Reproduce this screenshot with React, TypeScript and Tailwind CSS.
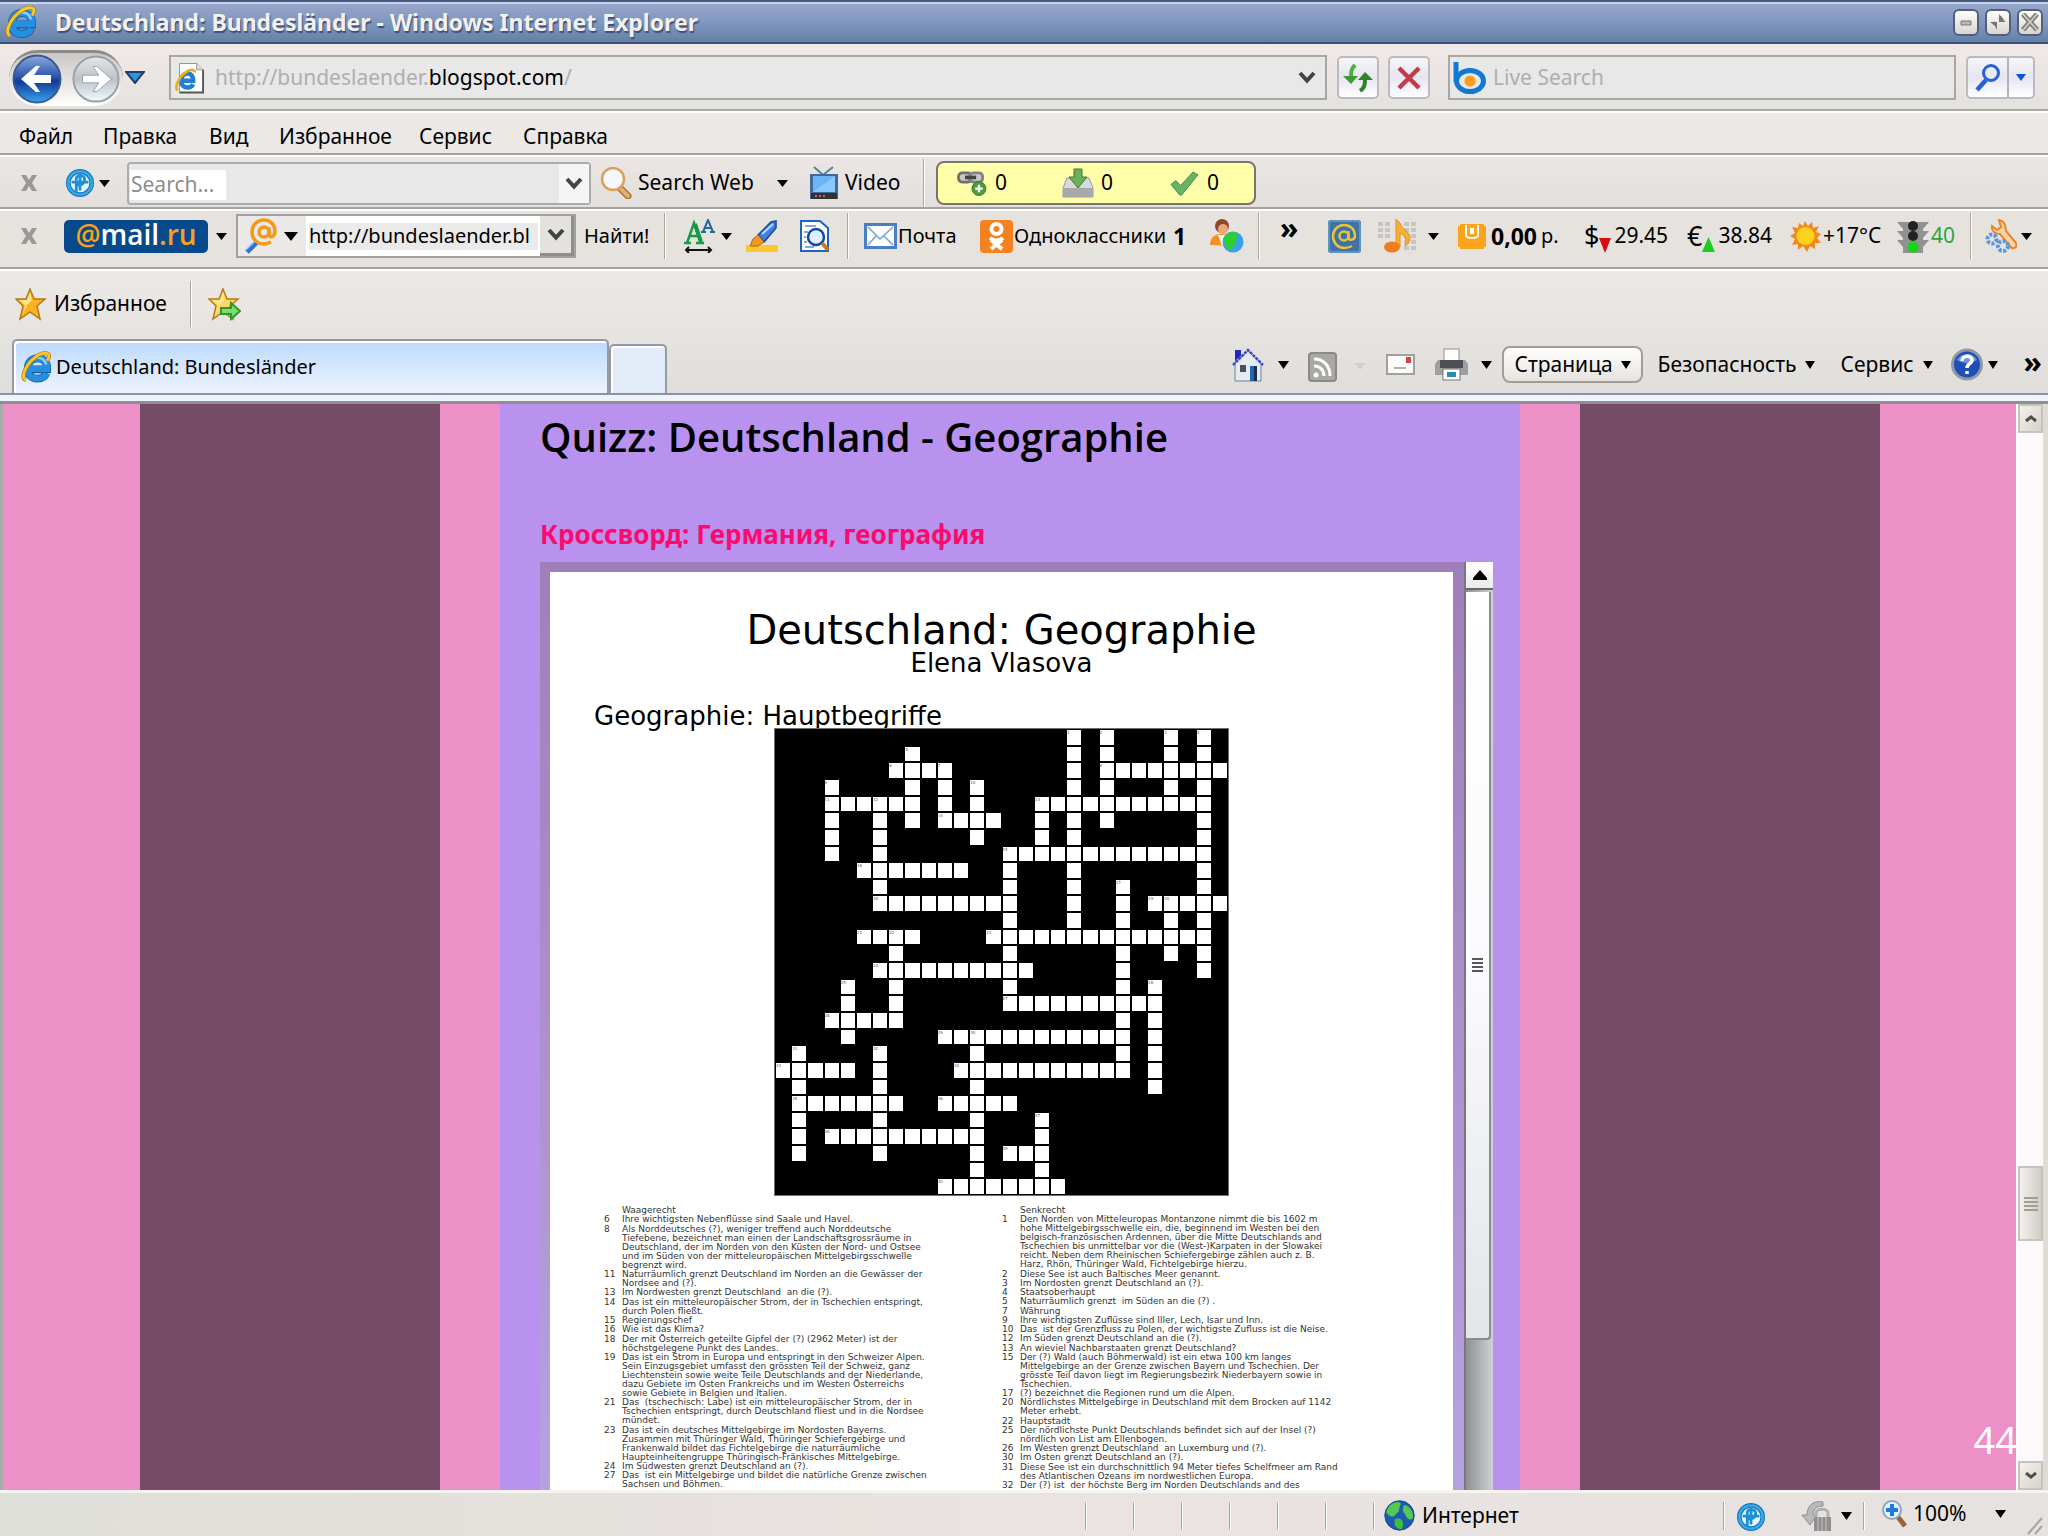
import type { ReactNode } from "react";

/* ---------- small shared pieces ---------- */

function Caret({ color = "#000", className = "" }: { color?: string; className?: string }) {
  return (
    <svg className={"shrink-0 " + className} width="12" height="8" viewBox="0 0 12 8" preserveAspectRatio="none" aria-hidden="true">
      <path d="M0 0H12L6 8Z" fill={color} />
    </svg>
  );
}

function Chevron({ className = "" }: { className?: string }) {
  return (
    <svg className={"shrink-0 " + className} width="18" height="13" viewBox="0 0 18 13" fill="none" stroke="#444" strokeWidth="4" aria-hidden="true">
      <path d="M2 2L9 9.500L16 2" />
    </svg>
  );
}

function Sep({ className = "" }: { className?: string }) {
  return <span className={"shrink-0 w-[2px] border-l border-l-[#a9a7a3] border-r border-r-white " + className} />;
}

function Tool({ label, className = "", children }: { label?: string; className?: string; children: ReactNode }) {
  return (
    <button type="button" aria-label={label} className={"flex shrink-0 items-center whitespace-nowrap " + className}>
      {children}
    </button>
  );
}

function CloseX() {
  return (
    <svg width="18" height="18" viewBox="0 0 18 18" aria-hidden="true">
      <path d="M1 1H6L9 6L12 1H17L12 9L17 17H12L9 12L6 17H1L6 9Z" fill="#9a9895" />
    </svg>
  );
}

/* ---------- icons ---------- */

function IeLogo({ className = "h-[33px] w-[30px]" }: { className?: string }) {
  return (
    <svg className={"shrink-0 " + className} viewBox="0 0 32 32" fill="none" aria-hidden="true">
      <path d="M9 18H27C27.500 9 22 6.500 17 6.500C11 6.500 7 11 7 17C7 24 11 27.500 17 27.500C22 27.500 25 25 26 22" stroke="#14589f" strokeWidth="8" />
      <path d="M9 17.500H27C27.500 9 22 6.500 17 6.500C11 6.500 7 11 7 17C7 24 11 27.500 17 27.500C22 27.500 25 25 26 22" stroke="#2590e2" strokeWidth="6.500" />
      <path d="M8 14C9 9 13 6 17 6C22 6 25 9 26 13" stroke="#7fd0fb" strokeWidth="2.500" />
      <path d="M5 29C-1 27 5 13 14 6C21 0 29 0 29 4C29 6 28 7.500 27 9" stroke="#a8760c" strokeWidth="4.200" />
      <path d="M5 29C-1 27 5 13 14 6C21 0 29 0 29 4C29 6 28 7.500 27 9" stroke="#f7c92f" strokeWidth="2.800" />
    </svg>
  );
}

function PageIe() {
  return (
    <svg className="h-[32px] w-[29px] shrink-0" viewBox="0 0 32 34" fill="none" aria-hidden="true">
      <path d="M5 1H24L31 8V33H5Z" fill="#fff" stroke="#8b8b8b" />
      <path d="M31 8V33H5" stroke="#555" strokeWidth="2" />
      <path d="M24 1V8H31" fill="#ddd" stroke="#8b8b8b" />
      <path d="M7 20H20C20 14 17 12 14 12C10 12 7 15 7 20C7 25 10 27.500 14 27.500C17 27.500 19 26 20 24" stroke="#1f7fd6" strokeWidth="5" />
      <path d="M3 31C-1 28 4 17 10 12C16 7 22 7 22 11" stroke="#e9b01e" strokeWidth="3" />
    </svg>
  );
}

function ToolbarGlobe() {
  return (
    <svg className="h-[30px] w-[28px] shrink-0" viewBox="0 0 30 30" fill="none" aria-hidden="true">
      <circle cx="15" cy="15" r="12.500" fill="#e8f6fd" stroke="#1478c0" strokeWidth="5" />
      <circle cx="15" cy="15" r="12.500" stroke="#3aa9e6" strokeWidth="2.500" />
      <path d="M15 5V23M6 14H24M11 25V10C11 6 20 6 20 11C20 17 15 17 11 17" stroke="#1d8fd6" strokeWidth="3" />
    </svg>
  );
}

function Magnifier() {
  return (
    <svg className="h-[32px] w-[32px] shrink-0" viewBox="0 0 32 32" fill="none" aria-hidden="true">
      <path d="M21 22L28 29" stroke="#a8723a" strokeWidth="7" strokeLinecap="round" />
      <path d="M21 22L28 29" stroke="#e3b071" strokeWidth="4" strokeLinecap="round" />
      <circle cx="13" cy="12" r="11" fill="#f4f8fd" stroke="#d9a05a" strokeWidth="2.500" />
    </svg>
  );
}

function Tv() {
  return (
    <svg className="h-[34px] w-[28px] shrink-0" viewBox="0 0 28 34" fill="none" aria-hidden="true">
      <path d="M4 1L13 9L23 1" stroke="#5f7d9c" strokeWidth="2" />
      <rect x="0" y="8" width="28" height="25" fill="#3e6b99" />
      <rect x="3" y="10" width="22" height="16" fill="#6cb4f8" />
      <path d="M3 26L25 10V26Z" fill="#8cc8ff" />
      <rect x="1" y="27" width="26" height="6" fill="#333" />
      <path d="M5 30H17" stroke="#c86a4a" strokeWidth="2" strokeDasharray="2 2" />
    </svg>
  );
}

function ChainPlus() {
  return (
    <svg className="h-[26px] w-[31px] shrink-0" viewBox="0 0 32 28" fill="none" aria-hidden="true">
      <rect x="2" y="3" width="14" height="10" rx="4" fill="#c9c9c9" stroke="#6f6f6f" strokeWidth="3" />
      <rect x="14" y="3" width="14" height="10" rx="4" fill="#c9c9c9" stroke="#828282" strokeWidth="3" />
      <path d="M9 8H21" stroke="#444" strokeWidth="4" />
      <circle cx="24" cy="20" r="7.500" fill="#4f9a3c" stroke="#3a7a2b" />
      <path d="M24 16V24M20 20H28" stroke="#fff" strokeWidth="2.500" />
    </svg>
  );
}

function DownloadTray() {
  return (
    <svg className="h-[30px] w-[32px] shrink-0" viewBox="0 0 32 30" aria-hidden="true">
      <path d="M5 10H27L31 20V29H1V20Z" fill="#d9d9dc" stroke="#9a9a9e" />
      <path d="M1 20H31V29H1Z" fill="#a8a8ad" />
      <path d="M12 1H20V9H25L16 20L7 9H12Z" fill="#6cb05a" stroke="#3f7d30" />
    </svg>
  );
}

function CheckMark() {
  return (
    <svg className="h-[25px] w-[29px] shrink-0" viewBox="0 0 30 26" aria-hidden="true">
      <path d="M1 14L6 10L11 15L24 1L29 4L12 25H10Z" fill="#67b267" stroke="#3f8b45" />
    </svg>
  );
}

function AtLens() {
  return (
    <svg className="h-[36px] w-[34px] shrink-0" viewBox="0 0 34 36" fill="none" aria-hidden="true">
      <path d="M3 34L13 24" stroke="#2f6fd0" strokeWidth="5" />
      <path d="M2 32L11 23" stroke="#9cc3ff" strokeWidth="1.500" />
      <circle cx="20" cy="14" r="5" stroke="#f59a17" strokeWidth="3.500" />
      <path d="M25 9V16C25 21 31 19 31 13C31 7 27 2 20 2C13 2 8 7 8 14C8 21 13 26 20 26C23 26 25 25 27 24" stroke="#f59a17" strokeWidth="3.500" />
    </svg>
  );
}

function FontSize() {
  return (
    <svg className="h-[34px] w-[32px] shrink-0" viewBox="0 0 32 34" fill="none" aria-hidden="true">
      <path d="M1 24H8M4 24L11 4L18 24M13 24H21M7 17H15" stroke="#18994a" strokeWidth="2.500" />
      <path d="M12 5L18 23" stroke="#18994a" strokeWidth="4" />
      <path d="M18 13H23M20 13L25 1L30 13M27 13H32M22 9H28" stroke="#1f6b9c" strokeWidth="2" />
      <path d="M3 31H28M6 28L3 31L6 34M25 28L28 31L25 34" stroke="#111" strokeWidth="2" />
    </svg>
  );
}

function Highlighter() {
  return (
    <svg className="h-[32px] w-[32px] shrink-0" viewBox="0 0 32 32" aria-hidden="true">
      <rect x="0" y="25" width="32" height="7" fill="#fcc62f" />
      <path d="M12 15L25 2L30 1V8L18 22Z" fill="#3f82dd" stroke="#1a4695" strokeWidth="1.500" />
      <path d="M16 14L27 4" stroke="#b9d8ff" strokeWidth="2" />
      <path d="M12 15L18 22L12 26H4L7 19Z" fill="#ef9a25" stroke="#b86408" />
    </svg>
  );
}

function PageSearch() {
  return (
    <svg className="h-[32px] w-[30px] shrink-0" viewBox="0 0 30 32" fill="none" aria-hidden="true">
      <path d="M1 1H20L28 8V31H1Z" fill="#fff" stroke="#1d62c9" strokeWidth="2" />
      <path d="M5 6H16M4 12H8M4 17H6M4 22H7M5 27H14" stroke="#7fa9e6" strokeWidth="2" />
      <circle cx="16" cy="17" r="8" fill="#dceeff" stroke="#1746a0" strokeWidth="2.500" />
      <path d="M22 23L28 30" stroke="#c87620" strokeWidth="4" />
    </svg>
  );
}

function Envelope() {
  return (
    <svg className="h-[26px] w-[33px] shrink-0" viewBox="0 0 33 26" fill="none" aria-hidden="true">
      <rect x="1.500" y="1.500" width="30" height="23" fill="#fbfdff" stroke="#4a7fc4" strokeWidth="3" />
      <path d="M4 4L16 16L29 4M4 22L12 13M29 22L20 13" stroke="#7aa2d6" strokeWidth="1.500" />
    </svg>
  );
}

function OkLogo() {
  return (
    <svg className="h-[33px] w-[33px] shrink-0" viewBox="0 0 33 33" fill="none" aria-hidden="true">
      <rect width="33" height="33" rx="4" fill="#f58220" />
      <circle cx="16.500" cy="9" r="5" stroke="#fff" strokeWidth="4" />
      <path d="M10 18C14 21 19 21 23 18M11 29L22 20M22 29L11 20" stroke="#fff" strokeWidth="4" />
    </svg>
  );
}

function PeopleGlobe() {
  return (
    <svg className="h-[34px] w-[34px] shrink-0" viewBox="0 0 34 34" aria-hidden="true">
      <circle cx="12" cy="7" r="7" fill="#8a4a28" />
      <circle cx="13" cy="10" r="5" fill="#e8a878" />
      <path d="M0 26C0 17 6 15 12 15C18 15 22 18 22 27Z" fill="#f98f20" />
      <path d="M8 16L12 27L17 16Z" fill="#fff" />
      <circle cx="23" cy="23" r="10.500" fill="#3aa0ee" />
      <path d="M14 18C18 12 26 12 28 15C26 19 28 22 24 27C22 32 18 31 15 27Z" fill="#2fce35" />
    </svg>
  );
}

function AtSquare() {
  return (
    <svg className="h-[33px] w-[33px] shrink-0" viewBox="0 0 33 33" fill="none" aria-hidden="true">
      <rect width="33" height="33" rx="3" fill="#3f73a8" />
      <rect x="1" y="1" width="31" height="31" rx="3" stroke="#5f93c4" strokeWidth="2" />
      <circle cx="16" cy="16" r="4.500" stroke="#e9c33a" strokeWidth="2.500" />
      <path d="M20.500 11V18C21 21 27 20 27 16C27 9 22 5 16 5C10 5 5 10 5 16C5 23 10 28 16 28C20 28 22 27 24 26" stroke="#e9c33a" strokeWidth="2.500" />
    </svg>
  );
}

function MusicNote() {
  return (
    <svg className="h-[34px] w-[38px] shrink-0" viewBox="0 0 38 34" fill="none" aria-hidden="true">
      <path d="M0 5H12M0 11H12M0 17H12M26 5H38M26 11H38M26 17H38M26 23H38M26 29H38" stroke="#c7c5c2" strokeWidth="4" strokeDasharray="5 2" />
      <path d="M18 0L22 4C24 11 33 13 32 20C31 24 29 26 27 27C30 20 26 16 22 14V28H18Z" fill="#f6b033" stroke="#e08f1c" />
      <ellipse cx="14" cy="28" rx="8" ry="5.500" fill="#ee7f1f" />
    </svg>
  );
}

function Purse() {
  return (
    <svg className="h-[25px] w-[28px] shrink-0" viewBox="0 0 28 25" fill="none" aria-hidden="true">
      <path d="M2 0H26V2H28V23H26V25H2V23H0V2H2Z" fill="#fba51c" />
      <path d="M8 1V11C8 15 20 15 20 11V1" stroke="#fff" strokeWidth="2" />
      <rect x="12" y="4" width="4" height="6" fill="#fff" />
    </svg>
  );
}

function Sun() {
  return (
    <svg className="h-[31px] w-[31px] shrink-0" viewBox="0 0 31 31" aria-hidden="true">
      <path d="M15 0L18 5L22 1L23 7L29 5L26 11L31 13L27 17L31 22L25 22L25 28L20 25L17 31L13 25L8 29L8 23L2 24L5 18L0 15L5 12L2 6L8 7L9 2L13 5Z" fill="#f08a1d" />
      <circle cx="15.500" cy="15" r="9" fill="#ffd21c" />
    </svg>
  );
}

function TrafficLight() {
  return (
    <svg className="h-[33px] w-[32px] shrink-0" viewBox="0 0 32 33" aria-hidden="true">
      <path d="M0 2H32L26 9V11H32L26 18V20H32L26 27V33H6V27L0 20H6V18L0 11H6V9Z" fill="#8f9192" />
      <circle cx="16" cy="6" r="5" fill="#222" />
      <circle cx="16" cy="16" r="5" fill="#222" />
      <circle cx="16" cy="27" r="5.500" fill="#15d515" />
    </svg>
  );
}

function Wrench() {
  return (
    <svg className="h-[34px] w-[32px] shrink-0" viewBox="0 0 32 34" fill="none" aria-hidden="true">
      <path d="M14 1C22 3 20 9 21 12L31 24C33 29 27 31 25 27L15 15C10 15 6 12 7 7L12 11L16 8Z" fill="#fbd3a5" stroke="#ee8324" strokeWidth="2" />
      <circle cx="7" cy="20" r="4.500" stroke="#5b95e0" strokeWidth="4" strokeDasharray="3 1.500" />
      <circle cx="18" cy="27" r="5" stroke="#5b95e0" strokeWidth="4" strokeDasharray="3 1.500" />
    </svg>
  );
}

function Star({ arrow = false }: { arrow?: boolean }) {
  return (
    <svg className="h-[33px] w-[33px] shrink-0" viewBox="0 0 33 33" aria-hidden="true">
      <path d="M15 1L19 11H30L22 18L25 31L15 24L5 31L8 18L1 11H11Z" fill={arrow ? "#fbd768" : "#fcb322"} stroke="#b87a10" strokeWidth="1.500" />
      <path d="M15 4L17 12L12 17L8 26L10 17L4 12H12Z" fill="#ffe48c" />
      {arrow && <path d="M13 20H23V15L32 23L23 31V26H13Z" fill="#7fdc6c" stroke="#2d9a28" strokeWidth="2" />}
    </svg>
  );
}

function HomeIcon() {
  return (
    <svg className="h-[34px] w-[32px] shrink-0" viewBox="0 0 32 34" aria-hidden="true">
      <path d="M3 2H9V8L3 13Z" fill="#2626c4" />
      <path d="M3 15L16 3L29 15V33H3Z" fill="#e4ebf3" stroke="#6b7f99" />
      <path d="M1 17L16 2L31 17" fill="none" stroke="#3b49c8" strokeWidth="2.500" strokeDasharray="3 1" />
      <rect x="8" y="17" width="6" height="7" fill="#4a4f5a" />
      <rect x="18" y="18" width="7" height="15" fill="#2264ad" />
      <rect x="22" y="18" width="3" height="15" fill="#17304f" />
    </svg>
  );
}

function RssIcon() {
  return (
    <svg className="h-[30px] w-[29px] shrink-0" viewBox="0 0 29 30" fill="none" aria-hidden="true">
      <rect x="1" y="1" width="27" height="28" rx="3" fill="#a9a8a5" stroke="#8b8a87" strokeWidth="2" />
      <circle cx="8" cy="23" r="2.500" fill="#fff" />
      <path d="M6 14C12 14 16 18 16 24M6 7C16 7 22 14 22 24" stroke="#fff" strokeWidth="3" />
    </svg>
  );
}

function MailSmall() {
  return (
    <svg className="h-[21px] w-[29px] shrink-0" viewBox="0 0 29 21" aria-hidden="true">
      <rect x="1" y="1" width="27" height="19" fill="#fcfcfc" stroke="#a3a09c" strokeWidth="2" />
      <rect x="20" y="3" width="5" height="6" fill="#d8433f" />
      <path d="M8 14H20" stroke="#999" strokeWidth="1.500" />
    </svg>
  );
}

function Printer() {
  return (
    <svg className="h-[33px] w-[33px] shrink-0" viewBox="0 0 33 33" aria-hidden="true">
      <rect x="9" y="1" width="15" height="12" fill="#fff" stroke="#8e8e8e" />
      <path d="M3 12H30L33 16V27H0V16Z" fill="#9d9fa1" />
      <rect x="5" y="12" width="23" height="8" fill="#4d5053" />
      <rect x="8" y="21" width="17" height="11" fill="#fff" stroke="#777" />
      <rect x="12" y="24" width="9" height="5" fill="#2b8cae" />
    </svg>
  );
}

function HelpIcon() {
  return (
    <svg className="h-[33px] w-[32px] shrink-0" viewBox="0 0 32 33" fill="none" aria-hidden="true">
      <circle cx="16" cy="16.500" r="14.500" fill="#1f4fb5" stroke="#8f97a8" strokeWidth="3" />
      <path d="M6 12C10 4 22 4 26 12C20 16 12 16 6 12Z" fill="#6d93e0" />
      <path d="M11 13C11 7 21 7 21 12C21 16 16 15 16 20M16 23V26" stroke="#fff" strokeWidth="3.500" />
    </svg>
  );
}

function EarthIcon() {
  return (
    <svg className="h-[31px] w-[31px] shrink-0" viewBox="0 0 31 31" aria-hidden="true">
      <circle cx="15.500" cy="15.500" r="15" fill="#1d5cb0" />
      <path d="M4 7C9 1 16 1 17 4C14 8 17 11 12 14C9 19 5 16 2 12Z" fill="#54c853" />
      <path d="M20 5C26 6 30 12 29 18C25 22 22 17 21 14C18 11 19 8 20 5Z" fill="#54c853" />
      <path d="M11 19C17 17 21 21 18 29C14 30 9 26 11 19Z" fill="#3fbf3c" />
      <circle cx="15.500" cy="15.500" r="14.500" fill="none" stroke="#1b4a86" />
    </svg>
  );
}

function LockArc() {
  return (
    <svg className="h-[32px] w-[32px] shrink-0" viewBox="0 0 32 32" fill="none" aria-hidden="true">
      <path d="M22 2C12 0 6 6 6 15H1L9 25L16 15H12C12 10 15 6 22 6Z" fill="#b9b9b9" stroke="#8f8f8f" />
      <path d="M15 18V13C15 8 27 8 27 13V18" stroke="#b0b0b0" strokeWidth="3" />
      <rect x="13" y="17" width="17" height="14" fill="#8f8f8f" />
      <path d="M21 17V31M17 17V31M25 17V31" stroke="#c5c5c5" />
    </svg>
  );
}

function ZoomPlus() {
  return (
    <svg className="h-[28px] w-[26px] shrink-0" viewBox="0 0 26 28" fill="none" aria-hidden="true">
      <path d="M16 17L23 26" stroke="#9a6238" strokeWidth="5" />
      <circle cx="10" cy="10" r="9" fill="#e4f2ff" stroke="#8ea6bd" strokeWidth="2" />
      <path d="M10 4V16M4 10H16" stroke="#1b7be0" strokeWidth="4" />
    </svg>
  );
}

/* ---------- browser chrome ---------- */

const windowButton =
  "flex h-[27px] w-[26px] items-center justify-center rounded-[6px] border-2 border-[#51607f] bg-linear-to-b from-white to-[#d9d5cc]";

function TitleBar() {
  return (
    <header className="flex h-[44px] shrink-0 items-center border-t-2 border-b-2 border-t-[#46587c] border-b-[#3c5078] bg-linear-to-b from-[#9aa7c9] via-[#7f98c0] to-[#6580a8] pr-[5px] pl-[5px] shadow-[inset_0_2px_0_#c3d3ee]">
      <IeLogo className="h-[33px] w-[32px]" />
      <h1 className="ml-[18px] flex-1 text-[23px] leading-[30px] font-bold whitespace-nowrap text-[#f3f1f0] [text-shadow:1px_2px_1px_#3e4f76]">
        Deutschland: Bundesländer - Windows Internet Explorer
      </h1>
      <div className="flex gap-[6px]">
        <button type="button" aria-label="Свернуть" className={windowButton}>
          <svg width="14" height="14" viewBox="0 0 14 14"><path d="M2 6H12V10H2Z" fill="#b9b8b2" stroke="#77766f" /></svg>
        </button>
        <button type="button" aria-label="Восстановить" className={windowButton}>
          <svg width="16" height="18" viewBox="0 0 16 18" fill="#77766f"><path d="M0 9H7V17L5 13ZM9 1V9H16L12 6Z" /><path d="M3 11L5 9M13 7L10 3" stroke="#77766f" strokeWidth="2" /></svg>
        </button>
        <button type="button" aria-label="Закрыть" className={windowButton}>
          <svg width="18" height="18" viewBox="0 0 18 18" fill="none"><path d="M2 1L16 17M16 1L2 17" stroke="#77766f" strokeWidth="5" /><path d="M2 1L16 17M16 1L2 17" stroke="#c9c7bf" strokeWidth="2" /></svg>
        </button>
      </div>
    </header>
  );
}

const field = "flex h-[45px] items-center border-2 border-[#a9a7a5] bg-[#e9e8e8]";
const navButton =
  "flex h-[43px] shrink-0 items-center justify-center rounded-[5px] border-2 border-[#bcbac0] bg-linear-to-b from-[#f6f5f7] via-[#e6e5f1] to-white";

function NavBar() {
  return (
    <div className="flex h-[67px] shrink-0 items-center border-b-2 border-b-[#a8a6a2] bg-linear-to-b from-[#f1e9e8] to-[#e3e2de] pt-[2px] pr-[13px]">
      <div className="ml-[9px] flex h-[56px] w-[114px] items-center gap-[10px] rounded-full border-t-[3px] border-t-[#8d8b88] bg-linear-to-b from-[#c9c7c4] to-white pl-[3px]">
        <button type="button" aria-label="Назад" className="rounded-full">
          <svg width="50" height="50" viewBox="0 0 50 50">
            <defs>
              <linearGradient id="back" x1="0" y1="0" x2="0" y2="1">
                <stop offset="0" stopColor="#8fa9de" />
                <stop offset="0.45" stopColor="#2c55ae" />
                <stop offset="0.55" stopColor="#123a98" />
                <stop offset="1" stopColor="#37a4ee" />
              </linearGradient>
            </defs>
            <circle cx="25" cy="25" r="23.500" fill="url(#back)" stroke="#3c5a92" strokeWidth="2" />
            <path d="M9 25L24 12H28L22 21H39V29H22L28 38H24Z" fill="#fff" />
          </svg>
        </button>
        <button type="button" aria-label="Вперёд" className="rounded-full">
          <svg width="48" height="50" viewBox="0 0 50 50">
            <defs>
              <linearGradient id="fwd" x1="0" y1="0" x2="0" y2="1">
                <stop offset="0" stopColor="#e6e6e8" />
                <stop offset="0.5" stopColor="#bcc2c9" />
                <stop offset="1" stopColor="#f2fbff" />
              </linearGradient>
            </defs>
            <circle cx="25" cy="25" r="23.500" fill="url(#fwd)" stroke="#98a0a8" strokeWidth="2" />
            <path d="M41 25L26 12H22L28 21H11V29H28L22 38H26Z" fill="#fff" stroke="#9ba3ab" />
          </svg>
        </button>
      </div>
      <button type="button" aria-label="Последние страницы" className="ml-[2px] w-[44px]">
        <svg width="20" height="13" viewBox="0 0 20 13"><path d="M1 1H19L10 12Z" fill="#2f93d4" stroke="#1c3f6d" strokeWidth="2" /></svg>
      </button>
      <div className={field + " min-w-0 flex-1 pr-[9px] pl-[4px]"}>
        <PageIe />
        <div role="textbox" aria-label="Адрес" className="ml-[11px] flex-1 text-[21px] whitespace-nowrap text-[#b0aeac]">
          http://bundeslaender.<span className="text-black">blogspot.com</span>/
        </div>
        <button type="button" aria-label="Показать адреса"><Chevron /></button>
      </div>
      <button type="button" aria-label="Обновить" className={navButton + " ml-[10px] w-[42px]"}>
        <svg width="30" height="28" viewBox="0 0 30 28" fill="none">
          <path d="M12 1C8 5 8 8 8 14" stroke="#4fae45" strokeWidth="4" /><path d="M0 12H15L8 20Z" fill="#3c9c33" />
          <path d="M17 27C22 24 22 20 22 14" stroke="#2e8426" strokeWidth="4" /><path d="M15 16H30L22 8Z" fill="#2e8426" />
        </svg>
      </button>
      <button type="button" aria-label="Остановить" className={navButton + " ml-[9px] w-[42px]"}>
        <svg width="24" height="24" viewBox="0 0 24 24"><path d="M2 2L22 22M22 2L2 22" stroke="#c13c4a" strokeWidth="4.500" /></svg>
      </button>
      <div className={field + " ml-[18px] w-[508px] pl-[3px]"}>
        <svg className="h-[32px] w-[33px] shrink-0" viewBox="0 0 33 32" fill="none" aria-hidden="true">
          <path d="M3 0V20" stroke="#0f79d3" strokeWidth="5" />
          <ellipse cx="17" cy="19" rx="13.500" ry="10.500" stroke="#0f79d3" strokeWidth="5" />
          <circle cx="17" cy="19" r="5.500" fill="#fb9d1b" />
        </svg>
        <input aria-label="Live Search" placeholder="Live Search" className="ml-[7px] min-w-0 flex-1 bg-transparent text-[21px] outline-none placeholder:text-[#b0aeac]" />
      </div>
      <div className={navButton + " ml-[10px] w-[69px]"}>
        <button type="button" aria-label="Найти" className="flex h-full flex-1 items-center justify-center">
          <svg width="26" height="28" viewBox="0 0 26 28" fill="none"><circle cx="16" cy="9" r="7.500" stroke="#2761d8" strokeWidth="3" /><path d="M11 16L2 26" stroke="#2761d8" strokeWidth="4.500" /></svg>
        </button>
        <button type="button" aria-label="Параметры поиска" className="flex h-full w-[26px] items-center justify-center border-l-2 border-l-[#b3b2ba]">
          <Caret color="#0a52e0" className="h-[7px] w-[10px]" />
        </button>
      </div>
    </div>
  );
}

function MenuBar() {
  return (
    <nav className="flex h-[44px] shrink-0 items-center border-t-2 border-b-2 border-t-white border-b-[#a5a3a0] bg-[#ece8e6] pl-[19px] pt-[6px] text-[21px] leading-[30px]">
      <button type="button" className="w-[84px] text-left">Файл</button>
      <button type="button" className="w-[106px] text-left">Правка</button>
      <button type="button" className="w-[70px] text-left">Вид</button>
      <button type="button" className="w-[140px] text-left">Избранное</button>
      <button type="button" className="w-[104px] text-left">Сервис</button>
      <button type="button" className="text-left">Справка</button>
    </nav>
  );
}

function SearchToolbar() {
  return (
    <div className="flex h-[54px] shrink-0 items-center border-t-2 border-b-2 border-t-white border-b-[#a5a3a0] bg-linear-to-b from-[#ebe6e4] to-[#e3dfdc] pt-[2px] text-[21px]">
      <Tool label="Закрыть панель" className="w-[66px] pl-[20px]"><CloseX /></Tool>
      <Tool label="Меню панели" className="w-[61px] gap-[5px]"><ToolbarGlobe /><Caret className="h-[7px] w-[11px]" /></Tool>
      <div className="flex h-[43px] w-[464px] shrink-0 items-center rounded-[4px] border-2 border-[#aeacaa] bg-[#e9e8e8]">
        <input aria-label="Search" placeholder="Search..." className="mx-[1px] mt-[3px] h-[30px] w-[96px] bg-white px-[1px] text-[21px] outline-none placeholder:text-[#8f8d8b]" />
        <button type="button" aria-label="История поиска" className="ml-auto flex h-full w-[30px] items-center justify-center bg-[#f6f5f5]"><Chevron /></button>
      </div>
      <Tool className="w-[186px] gap-[6px] pl-[9px]"><Magnifier />Search Web</Tool>
      <Tool label="Варианты поиска" className="w-[33px]"><Caret className="h-[7px] w-[11px]" /></Tool>
      <Tool className="w-[113px] gap-[7px]"><Tv />Video</Tool>
      <Sep className="h-[48px]" />
      <div className="ml-[11px] flex h-[44px] w-[320px] items-center rounded-[8px] border-2 border-[#77766a] bg-[#ffffaa]">
        <Tool label="Ссылки: 0" className="w-[106px] gap-[8px] pl-[18px]"><ChainPlus />0</Tool>
        <Tool label="Загрузки: 0" className="w-[108px] gap-[7px] pl-[18px]"><DownloadTray />0</Tool>
        <Tool label="Проверено: 0" className="gap-[8px] pl-[18px]"><CheckMark />0</Tool>
      </div>
    </div>
  );
}

function MailToolbar() {
  return (
    <div className="flex h-[60px] shrink-0 items-center border-t-2 border-b-2 border-t-white border-b-[#a5a3a0] bg-[#e6e3df] pb-[6px] text-[20px]">
      <Tool label="Закрыть панель" className="w-[64px] pl-[20px]"><CloseX /></Tool>
      <Tool label="mail.ru" className="w-[172px]">
        <span className="flex h-[33px] w-[144px] items-center justify-center rounded-[5px] bg-[#074a8c] pb-[3px] font-['Open_Sans'] text-[28px] leading-[33px] font-semibold text-white">
          <span className="text-[#f7a01e]">@</span>mail<span className="text-[#f7a01e]">.ru</span>
        </span>
        <Caret className="ml-[8px] h-[7px] w-[11px]" />
      </Tool>
      <div className="flex h-[44px] w-[340px] shrink-0 items-center border-2 border-[#a3a19e] bg-white">
        <Tool label="Поиск Mail.ru" className="h-full w-[68px] bg-[#ebe9e7] pl-[6px]"><AtLens /><Caret className="ml-[6px] h-[9px] w-[14px]" /></Tool>
        <input aria-label="Запрос" defaultValue="http://bundeslaender.bl" className="ml-[3px] h-[27px] w-[229px] min-w-0 bg-[#ebeaea] text-[20px] outline-none" />
        <button type="button" aria-label="История запросов" className="ml-auto flex h-full w-[34px] items-center justify-center border-r-[3px] border-b-[3px] border-[#8f8d8a] bg-[#e4e2de]"><Chevron /></button>
      </div>
      <Tool className="w-[88px] pl-[8px]">Найти!</Tool>
      <Sep className="h-[46px]" />
      <Tool label="Размер шрифта" className="ml-[17px] w-[63px] gap-[6px]"><FontSize /><Caret className="h-[7px] w-[11px]" /></Tool>
      <Tool label="Выделить" className="w-[54px]"><Highlighter /></Tool>
      <Tool label="Поиск на странице" className="w-[47px]"><PageSearch /></Tool>
      <Sep className="h-[46px]" />
      <Tool className="ml-[15px] w-[116px] gap-[1px]"><Envelope />Почта</Tool>
      <Tool className="w-[230px] gap-[1px]"><OkLogo />Одноклассники <b className="ml-[6px] text-[23px]">1</b></Tool>
      <Tool label="Друзья" className="w-[48px]"><PeopleGlobe /></Tool>
      <Sep className="h-[46px]" />
      <Tool label="Ещё кнопки" className="w-[68px] pb-[16px] pl-[20px] text-[30px] leading-[30px] font-bold">»</Tool>
      <Tool label="Агент" className="w-[50px]"><AtSquare /></Tool>
      <Tool label="Музыка" className="w-[80px] gap-[12px]"><MusicNote /><Caret className="h-[7px] w-[11px]" /></Tool>
      <Tool className="w-[126px]"><Purse /><b className="mr-[4px] ml-[5px] text-[23px]">0,00</b>р.</Tool>
      <Tool className="w-[103px] text-[21px]">
        <span className="text-[27px]">$</span>
        <Caret color="#d50d14" className="mt-[18px] mr-[3px] h-[15px] w-[12px]" />29.45
      </Tool>
      <Tool className="w-[103px] text-[21px]">
        <span className="text-[27px]">€</span>
        <Caret color="#17cf1c" className="mt-[16px] mr-[3px] h-[15px] w-[13px] rotate-180" />38.84
      </Tool>
      <Tool className="w-[107px] gap-[2px] text-[21px]"><Sun />+17°C</Tool>
      <Tool className="w-[73px] gap-[2px] text-[21px] text-[#2da53a]"><TrafficLight />40</Tool>
      <Sep className="h-[46px]" />
      <Tool label="Настройки" className="ml-[13px] gap-[4px]"><Wrench /><Caret className="h-[7px] w-[11px]" /></Tool>
    </div>
  );
}

function TabArea() {
  return (
    <div className="shrink-0 border-t-2 border-t-white bg-linear-to-b from-[#ece9e6] to-[#dfddd9] text-[20px]">
      <div className="flex h-[70px] items-center pb-[4px]">
        <Tool className="w-[190px] gap-[6px] pl-[15px] text-[21px]"><Star />Избранное</Tool>
        <Sep className="h-[46px]" />
        <Tool label="Добавить на панель избранного" className="ml-[16px]"><Star arrow /></Tool>
      </div>
      <div className="flex h-[54px] items-end border-b-2 border-b-[#8c93a3]">
        <button type="button" className="ml-[12px] flex h-[54px] w-[597px] items-center rounded-t-[5px] border-2 border-b-0 border-[#9499a3] bg-linear-to-b from-[#bddafd] to-[#edf3fe] pl-[7px] shadow-[inset_2px_2px_0_#fff]">
          <IeLogo className="mr-[4px] h-[33px] w-[31px]" />Deutschland: Bundesländer
        </button>
        <button type="button" aria-label="Новая вкладка" className="h-[49px] w-[58px] rounded-t-[5px] border-2 border-b-0 border-[#9499a3] bg-[#e2ebf8] shadow-[inset_2px_2px_0_#fff]" />
        <div className="ml-auto flex h-full items-center pr-[6px] pb-[5px] text-[21px]">
          <Tool label="Домой" className="w-[76px] gap-[14px]"><HomeIcon /><Caret className="h-[8px] w-[11px]" /></Tool>
          <Tool label="Веб-каналы" className="w-[78px] gap-[18px] pt-[4px]"><RssIcon /><Caret color="#d2d0cc" className="h-[7px] w-[10px]" /></Tool>
          <Tool label="Почта" className="w-[49px]"><MailSmall /></Tool>
          <Tool label="Печать" className="w-[67px] gap-[13px]"><Printer /><Caret className="h-[8px] w-[11px]" /></Tool>
          <Tool className="mr-[15px] h-[37px] w-[141px] gap-[8px] rounded-[8px] border-2 border-[#a19e9a] bg-linear-to-b from-white to-[#e6e3de] pl-[11px]">Страница<Caret className="h-[8px] w-[10px]" /></Tool>
          <Tool className="w-[183px] gap-[9px]">Безопасность<Caret className="h-[8px] w-[10px]" /></Tool>
          <Tool className="w-[110px] gap-[9px]">Сервис<Caret className="h-[8px] w-[10px]" /></Tool>
          <Tool label="Справка" className="w-[73px] gap-[5px]"><HelpIcon /><Caret className="h-[8px] w-[10px]" /></Tool>
          <Tool label="Ещё команды" className="pb-[6px] text-[30px] leading-[30px] font-bold">»</Tool>
        </div>
      </div>
      <div className="h-[9px] border-b-[3px] border-b-[#8f8f92] bg-[#eff3fd]" />
    </div>
  );
}

/* ---------- crossword ---------- */

const range = (from: number, to: number) => Array.from({ length: to - from + 1 }, (_, i) => from + i);

const COLUMNS = 28;
const OPEN_CELLS: number[][] = [
  [18, 20, 24, 26],
  [8, 18, 20, 24, 26],
  [...range(7, 10), 18, ...range(20, 27)],
  [3, 8, 10, 12, 18, 20, 24, 26],
  [...range(3, 8), 10, 12, ...range(16, 26)],
  [3, 6, 8, ...range(10, 13), 16, 18, 20, 26],
  [3, 6, 12, 16, 18, 26],
  [3, 6, ...range(14, 26)],
  [...range(5, 11), 14, 18, 26],
  [6, 14, 18, 21, 26],
  [...range(6, 14), 18, 21, ...range(23, 27)],
  [14, 18, 21, 24, 26],
  [...range(5, 8), ...range(13, 26)],
  [7, 14, 21, 24, 26],
  [...range(6, 15), 21, 26],
  [4, 7, 14, 21, 23],
  [4, 7, ...range(14, 23)],
  [...range(3, 7), 21, 23],
  [4, ...range(10, 21), 23],
  [1, 6, 12, 21, 23],
  [...range(0, 4), 6, ...range(11, 21), 23],
  [1, 6, 12, 23],
  [...range(1, 7), ...range(10, 14)],
  [1, 6, 12, 16],
  [1, ...range(3, 12), 16],
  [1, 6, 12, ...range(14, 16)],
  [12, 16],
  range(10, 17),
];

const isOpen = (r: number, c: number) => OPEN_CELLS[r]?.includes(c) ?? false;

function buildCells() {
  let next = 1;
  return OPEN_CELLS.flatMap((_, r) =>
    range(0, COLUMNS - 1).map((c) => {
      const open = isOpen(r, c);
      const starts =
        open && ((!isOpen(r, c - 1) && isOpen(r, c + 1)) || (!isOpen(r - 1, c) && isOpen(r + 1, c)));
      return { key: r + "-" + c, open, label: starts ? next++ : null };
    }),
  );
}

const CELLS = buildCells();

function Crossword() {
  return (
    <div className="relative mx-auto grid h-[468px] w-[455px] grid-cols-[repeat(28,minmax(0,1fr))] grid-rows-[repeat(28,minmax(0,1fr))] gap-[2px] border border-[#6f6f6f] bg-black p-[1px]">
      {CELLS.map((cell) => (
        <span key={cell.key} className={cell.open ? "overflow-hidden bg-white text-[4px] leading-[5px] text-[#555]" : ""}>
          {cell.label}
        </span>
      ))}
    </div>
  );
}

type Clue = [string, string];

const ACROSS: Clue[] = [
  ["", "Waagerecht"],
  ["6", "Ihre wichtigsten Nebenflüsse sind Saale und Havel."],
  ["8", "Als Norddeutsches (?), weniger treffend auch Norddeutsche\nTiefebene, bezeichnet man einen der Landschaftsgrossräume in\nDeutschland, der im Norden von den Küsten der Nord- und Ostsee\nund im Süden von der mitteleuropäischen Mittelgebirgsschwelle\nbegrenzt wird."],
  ["11", "Naturräumlich grenzt Deutschland im Norden an die Gewässer der\nNordsee and (?)."],
  ["13", "Im Nordwesten grenzt Deutschland  an die (?)."],
  ["14", "Das ist ein mitteleuropäischer Strom, der in Tschechien entspringt,\ndurch Polen fließt."],
  ["15", "Regierungschef"],
  ["16", "Wie ist das Klima?"],
  ["18", "Der mit Österreich geteilte Gipfel der (?) (2962 Meter) ist der\nhöchstgelegene Punkt des Landes."],
  ["19", "Das ist ein Strom in Europa und entspringt in den Schweizer Alpen.\nSein Einzugsgebiet umfasst den grössten Teil der Schweiz, ganz\nLiechtenstein sowie weite Teile Deutschlands and der Niederlande,\ndazu Gebiete im Osten Frankreichs und im Westen Österreichs\nsowie Gebiete in Belgien und Italien."],
  ["21", "Das  (tschechisch: Labe) ist ein mitteleuropäischer Strom, der in\nTschechien entspringt, durch Deutschland fliest und in die Nordsee\nmündet."],
  ["23", "Das ist ein deutsches Mittelgebirge im Nordosten Bayerns.\nZusammen mit Thüringer Wald, Thüringer Schiefergebirge und\nFrankenwald bildet das Fichtelgebirge die naturräumliche\nHaupteinheitengruppe Thüringisch-Fränkisches Mittelgebirge."],
  ["24", "Im Südwesten grenzt Deutschland an (?)."],
  ["27", "Das  ist ein Mittelgebirge und bildet die natürliche Grenze zwischen\nSachsen und Böhmen."],
  ["28", "Die Westgrenze bildet das Gebiet zwischen Rhein und Saar."],
];

const DOWN: Clue[] = [
  ["", "Senkrecht"],
  ["1", "Den Norden von Mitteleuropas Montanzone nimmt die bis 1602 m\nhohe Mittelgebirgsschwelle ein, die, beginnend im Westen bei den\nbelgisch-französischen Ardennen, über die Mitte Deutschlands and\nTschechien bis unmittelbar vor die (West-)Karpaten in der Slowakei\nreicht. Neben dem Rheinischen Schiefergebirge zählen auch z. B.\nHarz, Rhön, Thüringer Wald, Fichtelgebirge hierzu."],
  ["2", "Diese See ist auch Baltisches Meer genannt."],
  ["3", "Im Nordosten grenzt Deutschland an (?)."],
  ["4", "Staatsoberhaupt"],
  ["5", "Naturräumlich grenzt  im Süden an die (?) ."],
  ["7", "Währung"],
  ["9", "Ihre wichtigsten Zuflüsse sind Iller, Lech, Isar und Inn."],
  ["10", "Das  ist der Grenzfluss zu Polen, der wichtigste Zufluss ist die Neise."],
  ["12", "Im Süden grenzt Deutschland an die (?)."],
  ["13", "An wieviel Nachbarstaaten grenzt Deutschland?"],
  ["15", "Der (?) Wald (auch Böhmerwald) ist ein etwa 100 km langes\nMittelgebirge an der Grenze zwischen Bayern und Tschechien. Der\ngrösste Teil davon liegt im Regierungsbezirk Niederbayern sowie in\nTschechien."],
  ["17", "(?) bezeichnet die Regionen rund um die Alpen."],
  ["20", "Nördlichstes Mittelgebirge in Deutschland mit dem Brocken auf 1142\nMeter erhebt."],
  ["22", "Hauptstadt"],
  ["25", "Der nördlichste Punkt Deutschlands befindet sich auf der Insel (?)\nnördlich von List am Ellenbogen."],
  ["26", "Im Westen grenzt Deutschland  an Luxemburg und (?)."],
  ["30", "Im Osten grenzt Deutschland an (?)."],
  ["31", "Diese See ist ein durchschnittlich 94 Meter tiefes Schelfmeer am Rand\ndes Atlantischen Ozeans im nordwestlichen Europa."],
  ["32", "Der (?) ist  der höchste Berg im Norden Deutschlands and des\nMittelgebirges Harz in Sachsen-Anhalt."],
];

function ClueList({ clues }: { clues: Clue[] }) {
  return (
    <ul className="flex h-[293px] w-[398px] flex-col justify-between text-[9px] leading-[9px] text-[#333]">
      {clues.map(([number, text]) => (
        <li key={number + text} className="flex">
          <span className="w-[18px] shrink-0">{number}</span>
          <span className="whitespace-pre">{text}</span>
        </li>
      ))}
    </ul>
  );
}

function Worksheet() {
  return (
    <section className="flex min-h-0 flex-1">
      <div className="min-w-0 flex-1 overflow-hidden bg-linear-to-b from-[#9f7fb9] to-[#b7a2e0] pt-[10px] pr-[11px] pl-[10px]">
        <div className="h-full overflow-hidden bg-white pt-[36px] font-['DejaVu_Sans'] text-black">
          <h3 className="text-center text-[40px] leading-[44px]">Deutschland: Geographie</h3>
          <p className="text-center text-[26px] leading-[22px]">Elena Vlasova</p>
          <p className="mt-[30px] h-[24px] pl-[44px] text-[26px] leading-[24px]">Geographie: Hauptbegriffe</p>
          <Crossword />
          <div className="mt-[10px] flex pl-[54px]">
            <ClueList clues={ACROSS} />
            <ClueList clues={DOWN} />
          </div>
        </div>
      </div>
      <div className="flex w-[29px] shrink-0 flex-col border-l-2 border-l-[#77777f] bg-linear-to-r from-[#8f9093] to-[#cfd1d2]">
        <button type="button" aria-label="Вверх" className="flex h-[28px] shrink-0 items-center justify-center border-b-2 border-b-[#66686a] bg-linear-to-b from-white to-[#ebebec]">
          <svg width="14" height="10" viewBox="0 0 14 10"><path d="M7 0L14 8V10H0V8Z" fill="#000" /></svg>
        </button>
        <div className="mt-[2px] mr-[2px] flex h-[748px] shrink-0 flex-col items-center justify-center gap-[2px] rounded-br-[4px] border-r-2 border-b-2 border-[#8a8c8e] bg-linear-to-b from-white via-[#fbfbfd] to-[#e3e5e8]">
          {range(0, 3).map((i) => (
            <span key={i} className="h-[2px] w-[11px] bg-[#55575c]" />
          ))}
        </div>
      </div>
    </section>
  );
}

/* ---------- page ---------- */

const scrollButton =
  "flex h-[29px] shrink-0 items-center justify-center border-2 border-[#c6c2bd] bg-linear-to-br from-[#f3f1ee] to-[#d8d3ca]";

function PageScrollbar() {
  return (
    <div className="flex w-[32px] shrink-0 flex-col border-r-[5px] border-l-2 border-r-[#dddcd5] border-l-white bg-[#fdf9fa]">
      <button type="button" aria-label="Прокрутить вверх" className={scrollButton}>
        <svg width="12" height="8" viewBox="0 0 12 8"><path d="M1 6L6 2L11 6" fill="none" stroke="#514e46" strokeWidth="3" /></svg>
      </button>
      <span className="flex-[733]" />
      <div className="flex h-[75px] flex-col items-center justify-center gap-[2px] border-2 border-[#c6c2bd] bg-linear-to-r from-[#f3f1ee] to-[#d3cdc4]">
        {range(0, 3).map((i) => (
          <span key={i} className="h-[2px] w-[14px] bg-[#a39e94]" />
        ))}
      </div>
      <span className="flex-[220]" />
      <button type="button" aria-label="Прокрутить вниз" className={scrollButton}>
        <svg width="12" height="8" viewBox="0 0 12 8"><path d="M1 1L6 5L11 1" fill="none" stroke="#514e46" strokeWidth="3" /></svg>
      </button>
    </div>
  );
}

function StatusBar() {
  return (
    <footer className="flex h-[46px] shrink-0 items-center justify-end border-t-[3px] border-t-[#f6f4f1] bg-linear-to-r from-[#dfdfd9] via-[#eae3e1] to-[#e6e2df] pt-[2px] pr-[2px] text-[21px]">
      {range(0, 6).map((i) => (
        <Sep key={i} className="mr-[46px] h-[28px]" />
      ))}
      <div className="-ml-[37px] flex w-[339px] items-center gap-[7px]"><EarthIcon />Интернет</div>
      <Sep className="h-[28px]" />
      <Tool label="Надстройка" className="ml-[12px] w-[64px] pt-[2px]"><ToolbarGlobe /></Tool>
      <Tool label="Защищённый режим" className="w-[62px] gap-[8px]"><LockArc /><Caret className="h-[8px] w-[11px]" /></Tool>
      <Sep className="h-[28px]" />
      <Tool className="ml-[17px] w-[144px] pb-[4px]"><ZoomPlus /><span className="ml-[5px] w-[82px] text-left">100%</span><Caret className="h-[8px] w-[11px]" /></Tool>
      <svg width="20" height="24" viewBox="0 0 20 24" className="self-end" aria-hidden="true">
        <path d="M2 22L16 6M9 22L16 14" stroke="#a8a5a0" strokeWidth="2" />
      </svg>
    </footer>
  );
}

export default function App() {
  return (
    <div className="flex h-screen flex-col overflow-hidden bg-[#e6e3df] font-['Noto_Sans',sans-serif] text-black">
      <TitleBar />
      <NavBar />
      <MenuBar />
      <SearchToolbar />
      <MailToolbar />
      <TabArea />
      <div className="flex min-h-0 flex-1 border-l-[3px] border-l-[#a9a9a9]">
        <main className="relative flex min-w-0 flex-1 bg-[#ed90c8]">
          <div className="grid w-full grid-cols-[137fr_300fr_60fr_1020fr_60fr_300fr_136fr]">
            <span />
            <span className="bg-[#754b65]" />
            <span />
            <article className="flex min-h-0 flex-col overflow-hidden bg-[#b991ef] pr-[27px] pl-[40px]">
              <h2 className="shrink-0 font-['Open_Sans'] text-[40px] leading-[66px] font-semibold whitespace-nowrap">
                Quizz: Deutschland - Geographie
              </h2>
              <p className="mt-[44px] mb-[8px] shrink-0 text-[26px] leading-[40px] font-bold whitespace-nowrap text-[#ff0a6c]">
                Кроссворд: Германия, география
              </p>
              <Worksheet />
            </article>
            <span />
            <span className="bg-[#754b65]" />
            <span />
          </div>
          <span className="absolute right-[-1px] bottom-[24px] text-[38px] leading-[54px] text-white">44</span>
        </main>
        <PageScrollbar />
      </div>
      <StatusBar />
    </div>
  );
}
